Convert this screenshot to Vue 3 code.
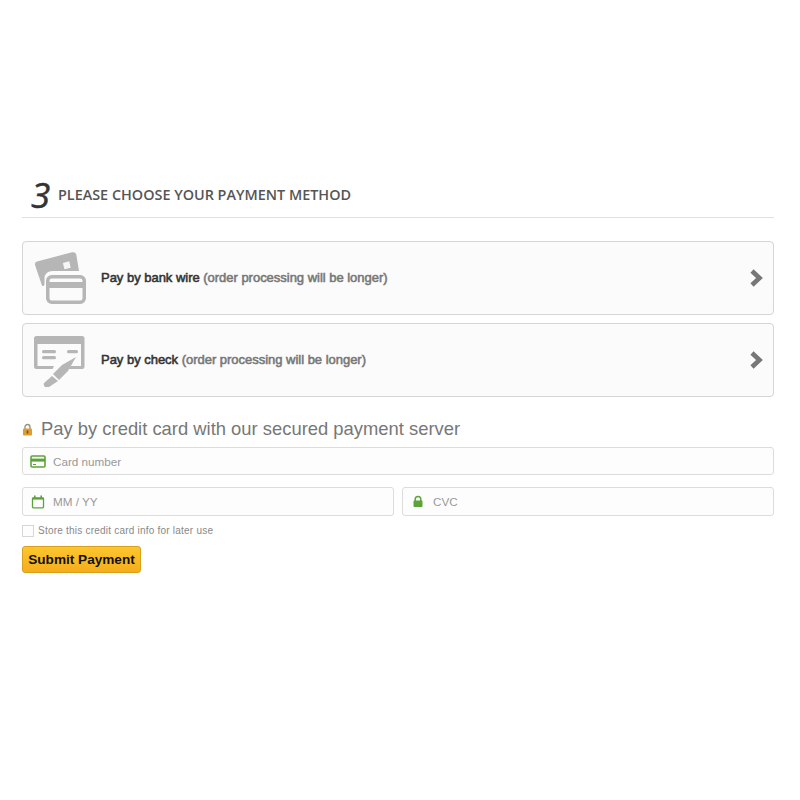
<script setup>
const options = [
  { id: 'bank', label: 'Pay by bank wire' },
  { id: 'check', label: 'Pay by check' },
]
</script>

<template>
  <div class="page">
    <h1 class="step-heading">
      <span class="step-num">3</span>
      <span class="step-text">Please choose your payment method</span>
    </h1>

    <a v-for="o in options" :key="o.id" class="pay-option">
      <svg v-if="o.id === 'bank'" class="pay-icon" width="54" height="54" viewBox="0 0 54 54">
        <path d="M3 10.5 L38 1.3 Q41.5 0.6 42.3 3.5 L45 20 L19 20 Q10.5 20 10.5 28 L10.5 33.5 Q9.5 36 8 34.5 L1 14 Q0.5 11.5 3 10.5 Z" fill="#b6b6b6" />
        <rect x="29.5" y="11" width="6.5" height="6.5" transform="rotate(-14 33 14)" fill="#f6f6f6" />
        <rect x="13.75" y="25.75" width="36.5" height="25.5" rx="4" fill="none" stroke="#b6b6b6" stroke-width="3.5" />
        <rect x="13" y="31" width="38" height="6" fill="#b6b6b6" />
      </svg>
      <svg v-else class="pay-icon" width="54" height="54" viewBox="0 0 54 54">
        <path d="M2.5 3 H48 Q50.5 3 50.5 5.5 V33.5 Q50.5 36 48 36 H34 L37 33 H47 V11 H3.5 V33 H20 L18.5 36 H2.5 Q0 36 0 33.5 V5.5 Q0 3 2.5 3 Z" fill="#b6b6b6" />
        <rect x="8" y="17" width="14" height="3.2" rx="1.5" fill="#b6b6b6" />
        <rect x="8" y="23" width="14" height="3.2" rx="1.5" fill="#b6b6b6" />
        <rect x="33" y="17" width="11" height="3.2" rx="1.5" fill="#b6b6b6" />
        <path d="M42 24 L28 32 L19 41 L25 47 L34 38 Z" fill="#b6b6b6" />
        <path d="M18 43 L10 50 Q9 52 11 54 Q13 55.5 15 54 L24 48 Z" fill="#b6b6b6" />
      </svg>
      <span class="pay-label"><b>{{ o.label }}</b> <span class="pay-note">(order processing will be longer)</span></span>
      <svg class="chevron" width="14" height="20" viewBox="0 0 14 20">
        <path d="M3 3 L10.5 10 L3 17" fill="none" stroke="#777" stroke-width="4.6" stroke-linejoin="miter" />
      </svg>
    </a>

    <h2 class="card-title">
      <svg width="11" height="13" viewBox="0 0 11 13">
        <path d="M3 6 V4 A2.5 2.5 0 0 1 8 4 V6" fill="none" stroke="#9a917f" stroke-width="1.4" />
        <rect x="1" y="5.5" width="9" height="7" rx="1" fill="#dd9d30" />
        <rect x="4.7" y="7.5" width="1.6" height="3" fill="#7a5318" />
      </svg>
      <span>Pay by credit card with our secured payment server</span>
    </h2>

    <div class="card-form">
      <label class="field field-card">
        <svg class="field-icon" width="16" height="13" viewBox="0 0 16 13">
          <rect x="1" y="1" width="14" height="11" rx="1.2" fill="none" stroke="#5da33c" stroke-width="1.6" />
          <rect x="1" y="3.6" width="14" height="3" fill="#5da33c" />
          <rect x="3" y="9" width="3" height="1" fill="#5da33c" />
        </svg>
        <span class="placeholder">Card number</span>
      </label>
      <div class="field-row">
        <label class="field">
          <svg class="field-icon" width="16" height="14" viewBox="0 0 16 14">
            <rect x="2.5" y="2.8" width="11" height="10" rx="0.8" fill="none" stroke="#5da33c" stroke-width="1.3" />
            <rect x="2.5" y="2.8" width="11" height="1.8" fill="#5da33c" />
            <rect x="4" y="0.5" width="1.6" height="3" fill="#5da33c" />
            <rect x="10.4" y="0.5" width="1.6" height="3" fill="#5da33c" />
          </svg>
          <span class="placeholder">MM / YY</span>
        </label>
        <label class="field">
          <svg class="field-icon" width="16" height="13" viewBox="0 0 16 13">
            <path d="M5.2 6 V4.2 A2.8 2.8 0 0 1 10.8 4.2 V6" fill="none" stroke="#5da33c" stroke-width="1.5" />
            <rect x="3.5" y="5.6" width="9" height="6.4" rx="0.8" fill="#5da33c" />
          </svg>
          <span class="placeholder">CVC</span>
        </label>
      </div>
      <label class="store">
        <span class="checkbox"></span>
        <span>Store this credit card info for later use</span>
      </label>
      <button class="submit" type="button">Submit Payment</button>
    </div>
  </div>
</template>

<style scoped>
.page {
  box-sizing: border-box;
  width: 800px;
  height: 800px;
  padding: 177px 26px 0 22px;
  background: #fff;
  font-family: "Liberation Sans", Arial, sans-serif;
}

.step-heading {
  display: flex;
  align-items: center;
  box-sizing: border-box;
  height: 41px;
  margin: 0 0 23px;
  padding-bottom: 5px;
  border-bottom: 1px solid #e0e0e0;
  font-weight: 400;
}

.step-num {
  box-sizing: border-box;
  width: 36px;
  padding-left: 9px;
  font-family: "Open Sans", sans-serif;
  font-size: 35px;
  font-style: italic;
  font-weight: 400;
  line-height: 40px;
  color: #333;
  -webkit-text-stroke: 0.5px currentColor;
}

.step-text {
  font-family: "Open Sans", sans-serif;
  font-size: 14.4px;
  font-weight: 600;
  text-transform: uppercase;
  color: #555;
}

.pay-option {
  display: flex;
  align-items: center;
  box-sizing: border-box;
  height: 74px;
  margin-bottom: 8px;
  padding: 0 10px 0 11px;
  background: #fbfbfb;
  border: 1px solid #d6d4d4;
  border-radius: 4px;
}

.pay-icon {
  flex: none;
  margin-right: 13px;
}

.pay-label {
  flex: 1;
  margin-top: -1px;
  font-size: 13px;
  letter-spacing: -0.02px;
  color: #333;
  -webkit-text-stroke: 0.55px currentColor;
}

.pay-label b {
  font-weight: 400;
}

.pay-note {
  color: #777;
}

.chevron {
  flex: none;
}

.card-title {
  display: flex;
  align-items: center;
  gap: 8px;
  height: 24px;
  margin: 20px 0 6px;
  font-size: 18.4px;
  font-weight: 400;
  color: #777;
}

.card-form {
  display: flex;
  flex-direction: column;
}

.field {
  display: flex;
  align-items: center;
  box-sizing: border-box;
  height: 29px;
  padding-left: 7px;
  background: #fdfdfd;
  border: 1px solid #dcdcdc;
  border-radius: 3px;
}

.field-card {
  height: 28px;
}

.field-row .field {
  flex: 1;
}

.field-icon {
  flex: none;
  margin-right: 7px;
}

.placeholder {
  font-size: 11.7px;
  color: #999;
}

.field-row {
  display: flex;
  gap: 8px;
  margin-top: 12px;
}

.store {
  display: flex;
  align-items: center;
  gap: 4px;
  height: 13px;
  margin-top: 8px;
  font-size: 10px;
  letter-spacing: 0.22px;
  color: #888;
}

.checkbox {
  box-sizing: border-box;
  width: 12px;
  height: 12px;
  background: #fdfdfd;
  border: 1px solid #d6d6d6;
}

.submit {
  align-self: flex-start;
  box-sizing: border-box;
  width: 119px;
  height: 27px;
  margin-top: 9px;
  padding: 0;
  background: linear-gradient(to bottom, #fcc62e, #f5ad1c);
  border: 1px solid #d9a01e;
  border-radius: 3px;
  font-family: "Liberation Sans", Arial, sans-serif;
  font-size: 13.6px;
  font-weight: 700;
  color: #111;
}
</style>

<style>
html, body {
  margin: 0;
  background: #fff;
}
</style>
